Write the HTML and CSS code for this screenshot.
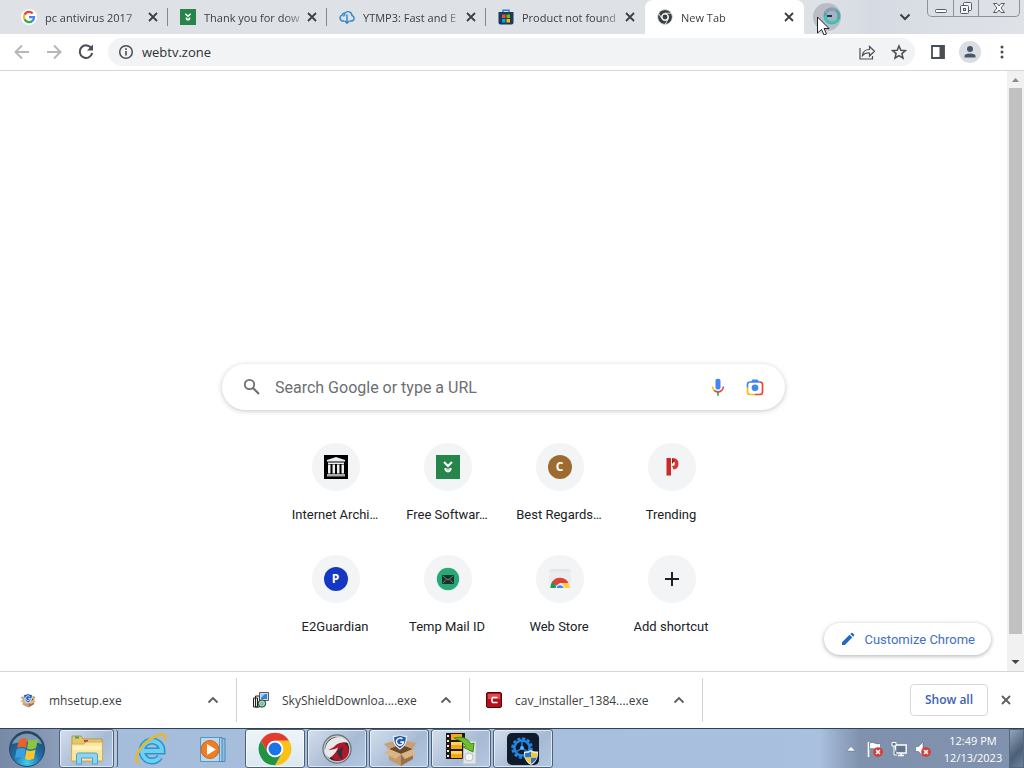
FILE: index.html
```html
<!DOCTYPE html>
<html lang="en">
  <head>
    <meta charset="UTF-8" />
    <meta name="viewport" content="width=device-width, initial-scale=1.0" />
    <title>New Tab</title>
    <link rel="stylesheet" href="styles.css">
  </head>
  <body>
    <!-- shared icons -->
    <svg class="sprite" aria-hidden="true">
      <symbol id="close" viewBox="0 0 16 16">
        <path d="M4 4l8 8M12 4l-8 8" fill="none" stroke="currentColor" stroke-width="1.8" />
      </symbol>
      <symbol id="chevron" viewBox="0 0 16 16">
        <path d="M3.5 10.5L8 6l4.5 4.5" fill="none" stroke="currentColor" stroke-width="1.8" />
      </symbol>
      <symbol id="filehippo" viewBox="0 0 24 24">
        <path fill="#25854a" d="M0 0h24v24H0z" />
        <path d="M8 7l4 4 4-4" fill="none" stroke="#fff" stroke-width="2" />
        <path d="M9.2 13q.3 3.5 2.800 3.500t2.800-3.500" fill="none" stroke="#fff" stroke-width="1.8" />
        <path d="M9.500 13.500l2.500 1 2.500-1" fill="none" stroke="#fff" />
      </symbol>
      <symbol id="shield" viewBox="0 0 24 24">
        <path fill="#e8f0fb" d="M12 1q4 3 10 2 1 14-10 20Q1 17 2 3q6 1 10-2z" />
        <path fill="#2359b0" d="M12 3q4 2.500 8.300 2Q20.500 16 12 21 3.500 16 3.700 5 8 5.500 12 3z" />
        <path d="M15.500 8A5 5 0 1 0 17 12h-4.500" fill="none" stroke="#fff" stroke-width="2" />
      </symbol>
      <symbol id="box" viewBox="0 0 34 34">
        <path fill="#c59a68" d="M6 16l12 5v12L6 27z" />
        <path fill="#9c7148" d="M18 21l12-5v10l-12 7z" />
        <path fill="#6f4a27" d="M6 16l11-5 13 5-12 5z" />
        <path fill="#d8b68c" d="M6 16l12 5-5 5L1 20zM30 16l-12 5 4 5 11-5z" />
        <path fill="#c9a074" d="M6 16l-5-5 10-3 5 4zM30 16l3-6-9-2-5 4z" />
      </symbol>
    </svg>

    <header class="tabstrip">
      <div class="tabs">
        <div class="tab">
          <svg class="favicon" viewBox="0 0 48 48">
            <circle cx="24" cy="24" r="24" fill="#fff" />
            <path fill="none" stroke="#ea4335" stroke-width="7" d="M35 13A15.5 15.5 0 0 0 10.5 17" />
            <path fill="none" stroke="#fbbc05" stroke-width="7" d="M10.5 17a15.5 15.5 0 0 0 0 14" />
            <path fill="none" stroke="#34a853" stroke-width="7" d="M10.5 31A15.5 15.5 0 0 0 34 36" />
            <path fill="none" stroke="#4285f4" stroke-width="7" d="M34 36q5-4 5-11.5H24" />
          </svg>
          <span class="tab-title">pc antivirus 2017</span>
          <button class="icon-button" aria-label="Close tab"><svg class="close"><use href="#close" /></svg></button>
        </div>
        <div class="tab">
          <svg class="favicon"><use href="#filehippo" /></svg>
          <span class="tab-title">Thank you for dow</span>
          <button class="icon-button" aria-label="Close tab"><svg class="close"><use href="#close" /></svg></button>
        </div>
        <div class="tab">
          <svg class="favicon" viewBox="0 0 16 16" fill="none" stroke="#2d87c8" stroke-width="1.4">
            <path d="M5.5 12H3.8A3 3 0 0 1 3 6.2 3 3 0 0 1 6 4a4 4 0 0 1 7 2.5 2.8 2.8 0 0 1-.5 5.5H10.5" />
            <path d="M8 5.5V14M5.800 12L8 14.300 10.200 12M4.500 7.500q.5-2 2-2" />
          </svg>
          <span class="tab-title">YTMP3: Fast and E</span>
          <button class="icon-button" aria-label="Close tab"><svg class="close"><use href="#close" /></svg></button>
        </div>
        <div class="tab">
          <svg class="favicon" viewBox="0 0 16 16">
            <path d="M5 4V1.2h6V4" fill="none" stroke="#2f7fd0" stroke-width="1.4" />
            <path fill="#1c3a5c" d="M.5 3h15v10.5q0 2-2 2h-11q-2 0-2-2z" />
            <path fill="#f25022" d="M4 5.5h3.500V9H4z" />
            <path fill="#7fba00" d="M8.500 5.500H12V9H8.500z" />
            <path fill="#00a4ef" d="M4 10h3.500v3.500H4z" />
            <path fill="#ffb900" d="M8.500 10H12v3.500H8.500z" />
          </svg>
          <span class="tab-title">Product not found</span>
          <button class="icon-button" aria-label="Close tab"><svg class="close"><use href="#close" /></svg></button>
        </div>
        <div class="tab active">
          <svg class="favicon" viewBox="-2 -2 52 52">
            <g fill="#3c4043" stroke="#fff" stroke-width="2">
              <path d="M3.2 12A24 24 0 0 1 44.8 12H24A12 12 0 0 0 13.6 30z" />
              <path d="M44.8 12A24 24 0 0 1 24 48l10.4-18A12 12 0 0 0 24 12z" />
              <path d="M24 48A24 24 0 0 1 3.2 12l10.4 18a12 12 0 0 0 20.8 0z" />
            </g>
            <circle cx="24" cy="24" r="8" fill="#3c4043" />
          </svg>
          <span class="tab-title">New Tab</span>
          <button class="icon-button" aria-label="Close tab"><svg class="close"><use href="#close" /></svg></button>
        </div>
      </div>
      <div class="new-tab">
        <button class="new-tab-button" aria-label="New tab"></button>
        <!-- busy mouse pointer over the new tab button -->
        <svg class="pointer" viewBox="0 0 28 30">
          <circle cx="17" cy="11" r="7" fill="#a9b3bf" stroke="#4fa7a7" stroke-width="3" />
          <path d="M10.500 8A7 7 0 0 1 21 5.500" fill="none" stroke="#8a9fb4" stroke-width="3" />
          <path d="M10 11a7 7 0 0 0 13 3" fill="none" stroke="#2fd0c0" stroke-width="2" />
          <path d="M12 11h5" stroke="#23343c" stroke-width="2" />
          <path d="M2.500 12v16l4-3.500L9 30l2.500-1L9 23.500h5z" fill="#fff" stroke="#222" />
        </svg>
      </div>
      <button class="icon-button tab-search" aria-label="Search tabs">
        <svg viewBox="0 0 16 16"><path d="M3.500 5.500L8 10l4.500-4.500" fill="none" stroke="#3c4043" stroke-width="2" /></svg>
      </button>
      <div class="window-buttons">
        <button aria-label="Minimize">
          <svg viewBox="0 0 24 16"><rect x="6.500" y="9.500" width="11" height="3" rx="1" fill="#fff" stroke="#555a66" /></svg>
        </button>
        <button aria-label="Restore">
          <svg viewBox="0 0 24 16" fill="#f4f5f8" stroke="#555a66">
            <rect x="9.500" y="2.500" width="8" height="8" rx="1" />
            <rect x="6.500" y="5.500" width="8" height="8" rx="1" />
            <rect x="9.500" y="8.500" width="2" height="2" />
          </svg>
        </button>
        <button class="wide" aria-label="Close">
          <svg viewBox="0 0 24 16"><path d="M6.500 3.500H10L12 6l2-2.500h3.500L14 8l3.500 4.500H14L12 10l-2 2.500H6.500L10 8z" fill="#fff" stroke="#555a66" /></svg>
        </button>
      </div>
    </header>

    <div class="toolbar">
      <button class="icon-button disabled" aria-label="Back">
        <svg viewBox="0 0 20 20"><path d="M17 10H3.500M10 3.500L3.500 10l6.500 6.500" /></svg>
      </button>
      <button class="icon-button disabled" aria-label="Forward">
        <svg viewBox="0 0 20 20"><path d="M3 10h13.500M10 3.500l6.500 6.500-6.500 6.500" /></svg>
      </button>
      <button class="icon-button" aria-label="Reload">
        <svg viewBox="0 0 20 20"><path d="M15.500 6.500A6.300 6.300 0 1 0 16.200 11" /><path d="M17 2.500v6h-6z" fill="#4a4d51" stroke="none" /></svg>
      </button>
      <form class="address-bar">
        <svg class="info" viewBox="0 0 16 16">
          <circle cx="8" cy="8" r="6.300" fill="none" stroke="#4a4d51" stroke-width="1.500" />
          <path d="M8 7v4.500M8 4.200V6" stroke="#4a4d51" stroke-width="1.600" />
        </svg>
        <input type="text" aria-label="Address and search bar" value="webtv.zone" />
        <button type="button" class="icon-button" aria-label="Share">
          <svg viewBox="0 0 20 20"><path d="M3 6v11h12.500v-3M5.500 13.500q.5-6 7-6v-3l5 4.800-5 4.700v-3q-4.500-.5-7 2.500z" stroke-width="1.200" /></svg>
        </button>
        <button type="button" class="icon-button" aria-label="Bookmark this page">
          <svg viewBox="0 0 20 20"><path d="M10 4l1.800 4.200 4.600.4-3.500 3 1.100 4.500-4-2.500-4 2.500 1.100-4.500-3.500-3 4.600-.4z" stroke-width="1.500" /></svg>
        </button>
      </form>
      <button class="icon-button" aria-label="Side panel">
        <svg viewBox="0 0 20 20"><path d="M4 4h12v12H4z" stroke-width="1.800" /><path d="M11.500 4H16v12h-4.500z" fill="#4a4d51" stroke="none" /></svg>
      </button>
      <button class="icon-button profile" aria-label="Profile">
        <svg viewBox="0 0 20 20"><path d="M10 4a3 3 0 1 1 0 6 3 3 0 0 1 0-6zM4.500 15.500V14q0-2.500 5.500-2.500t5.500 2.500v1.500z" fill="#4a5568" stroke="none" /></svg>
      </button>
      <button class="icon-button" aria-label="Menu">
        <svg viewBox="0 0 20 20"><path d="M10 5h.01M10 10h.01M10 15h.01" stroke-width="3" stroke-linecap="round" /></svg>
      </button>
    </div>

    <div class="viewport">
      <main class="new-tab-page">
        <form class="search-box">
          <svg class="search-icon" viewBox="0 0 20 20">
            <circle cx="7.500" cy="7.500" r="4.700" fill="none" stroke="#6b6f74" stroke-width="1.800" />
            <path d="M11 11l6 6" stroke="#6b6f74" stroke-width="2" />
          </svg>
          <input type="text" aria-label="Search" placeholder="Search Google or type a URL" />
          <button type="button" class="icon-button" aria-label="Search by voice">
            <svg viewBox="0 0 24 24">
              <rect x="9" y="2" width="6" height="13" rx="2.500" fill="#4285f4" />
              <path d="M5.500 11.500q0 3 2 4.500" fill="none" stroke="#fbbc04" stroke-width="1.800" />
              <path d="M7.500 16q4.500 4 9 0 2-1.500 2-4.500" fill="none" stroke="#ea4335" stroke-width="1.800" />
              <path d="M12 18v4.500" stroke="#34a853" stroke-width="2" />
            </svg>
          </button>
          <button type="button" class="icon-button" aria-label="Search by image">
            <svg viewBox="0 0 24 24" fill="none" stroke-width="2">
              <path d="M3 13V9q0-3 3-3h12" stroke="#4285f4" />
              <path fill="#4285f4" d="M7 6l2-3h6l2 3z" />
              <path d="M3 13v5q0 3 3 3h6" stroke="#fbbc04" />
              <path d="M12 21h6q3 0 3-3V9q0-3-3-3" stroke="#ea4335" />
              <circle cx="12" cy="13" r="4" fill="#4285f4" />
            </svg>
          </button>
        </form>

        <nav class="shortcuts">
          <a class="shortcut" href="#">
            <span class="tile">
              <svg viewBox="0 0 24 24">
                <path d="M0 0h24v24H0z" />
                <path fill="#eee" d="M12 2l9 3v1.500H3V5zM4 7.500h16V9H4zM4 9.500h2.500v9H4zM8.500 9.500H11v9H8.500zM13 9.500h2.500v9H13zM17.500 9.500H20v9h-2.500z" />
                <path fill="#aaa" d="M3 19h18v2.500H3z" />
              </svg>
            </span>
            <span class="label">Internet Archi…</span>
          </a>
          <a class="shortcut" href="#">
            <span class="tile"><svg><use href="#filehippo" /></svg></span>
            <span class="label">Free Softwar…</span>
          </a>
          <a class="shortcut" href="#">
            <span class="tile"><span class="letter brown">C</span></span>
            <span class="label">Best Regards…</span>
          </a>
          <a class="shortcut" href="#">
            <span class="tile">
              <svg viewBox="0 0 24 24">
                <path fill="#c92a2a" d="M6.500 3h4.500v17.500H6.500z" />
                <path fill="#d83535" d="M12 3q6.500 0 6.500 5.500t-5 6L12 11q3 0 3-2.500t-3-2z" />
                <path fill="#8f1d22" d="M12 3.500l2.500 2.500-2.500 3z" />
              </svg>
            </span>
            <span class="label">Trending</span>
          </a>
          <a class="shortcut" href="#">
            <span class="tile"><span class="letter blue">P</span></span>
            <span class="label">E2Guardian</span>
          </a>
          <a class="shortcut" href="#">
            <span class="tile">
              <svg viewBox="0 0 24 24">
                <circle cx="12" cy="12" r="11.200" fill="#27a877" />
                <rect x="6" y="8" width="12" height="9" rx="1" fill="#17302a" />
                <path d="M7 9l5 4 5-4M7 16l3.500-4M17 16l-3.500-4" fill="none" stroke="#66857c" />
              </svg>
            </span>
            <span class="label">Temp Mail ID</span>
          </a>
          <a class="shortcut" href="#">
            <span class="tile">
              <svg viewBox="0 0 24 24">
                <path fill="#eaedee" d="M1 2h22v19H1z" />
                <path fill="#e2e6e8" d="M3 2h18v3H3z" />
                <path fill="#0f9d58" d="M2.500 21q0-5 2.500-7l4 7z" />
                <path fill="#db4437" d="M4 15a9.500 9.500 0 0 1 16.500 1H12l-4 3z" />
                <path fill="#ffcd40" d="M14 16h6.500q1.200 2 1.200 5H16z" />
                <path fill="#f1f1f1" d="M7.500 21a4.600 4.600 0 0 1 9 0z" />
                <path fill="#4285f4" d="M8.500 21a3.600 3.600 0 0 1 7 0z" />
              </svg>
            </span>
            <span class="label">Web Store</span>
          </a>
          <a class="shortcut" href="#">
            <span class="tile">
              <svg viewBox="0 0 24 24"><path d="M12 5v14M5 12h14" stroke="#202124" stroke-width="2" /></svg>
            </span>
            <span class="label">Add shortcut</span>
          </a>
        </nav>

        <button class="customize">
          <svg viewBox="0 0 16 16"><path fill="#2467c9" d="M2 14v-2.800l7.500-7.500 2.800 2.800L4.800 14zM10.300 2.900l1-1q.6-.5 1.200 0l1.600 1.600q.5.600 0 1.200l-1 1z" /></svg>
          Customize Chrome
        </button>
      </main>
      <div class="scrollbar">
        <svg viewBox="0 0 17 17"><path fill="#8b8b8b" d="M5 11l3.500-4 3.500 4z" /></svg>
        <div class="thumb"></div>
        <svg viewBox="0 0 17 17"><path fill="#444" d="M4.500 6L8.500 10l4-4z" /></svg>
      </div>
    </div>

    <section class="downloads">
      <div class="download">
        <svg class="file-icon" viewBox="0 0 34 34">
          <use href="#box" />
          <use href="#shield" x="5" y="1" width="24" height="25" />
        </svg>
        <span class="file-name">mhsetup.exe</span>
        <button class="icon-button" aria-label="Options"><svg><use href="#chevron" /></svg></button>
      </div>
      <div class="download">
        <svg class="file-icon" viewBox="0 0 16 16">
          <path fill="#e9e9e9" stroke="#222" d="M.5 6h4v9h-4zM2.500 4h4v11h-4z" />
          <path fill="#d5dae0" stroke="#333" stroke-width=".8" d="M6.500.5h9v8h-9z" />
          <path fill="#2d86dc" d="M8 2h6v5H8z" />
          <path fill="#8ecbff" d="M8 2h4L8 6z" />
          <circle cx="9" cy="11.500" r="3.700" fill="#9be0b0" stroke="#17362a" />
          <circle cx="9" cy="11.500" r="1" fill="#fff" stroke="#333" stroke-width=".5" />
        </svg>
        <span class="file-name">SkyShieldDownloa....exe</span>
        <button class="icon-button" aria-label="Options"><svg><use href="#chevron" /></svg></button>
      </div>
      <div class="download">
        <svg class="file-icon" viewBox="0 0 16 16">
          <rect x=".5" y=".5" width="15" height="15" rx="1.500" fill="#b80f19" stroke="#4c090d" />
          <path fill="#dd4a50" d="M2 2h12v5H2z" />
          <path d="M11.500 5.500H6.500q-1.500 2.500 0 5h5" fill="none" stroke="#fff" stroke-width="1.600" />
        </svg>
        <span class="file-name">cav_installer_1384....exe</span>
        <button class="icon-button" aria-label="Options"><svg><use href="#chevron" /></svg></button>
      </div>
      <button class="show-all">Show all</button>
      <button class="icon-button" aria-label="Close downloads bar"><svg><use href="#close" /></svg></button>
    </section>

    <footer class="taskbar">
      <button class="start" aria-label="Start">
        <svg viewBox="0 0 38 38">
          <defs>
            <radialGradient id="orb" cx=".5" cy=".9" r=".9">
              <stop offset="0" stop-color="#3fd0f5" />
              <stop offset=".45" stop-color="#1f6ea9" />
              <stop offset="1" stop-color="#24435f" />
            </radialGradient>
          </defs>
          <circle cx="19" cy="19" r="17.500" fill="url(#orb)" stroke="#2a4560" />
          <path fill="#b8cad9" opacity=".6" d="M4 14a16 16 0 0 1 30 0q-15-5-30 0z" />
          <path fill="#e8622a" d="M11 10q4-3 8.500-1L18 18q-4-2-9 0z" />
          <path fill="#8cc63e" d="M20.500 9.500q4 2 9.500-.5L28 18q-4.500 2.500-9 .5z" />
          <path fill="#3c9fe0" d="M8.500 19.500q4.500-2.500 9-.5L16 28q-4.500-2-9 .5z" />
          <path fill="#fcc52d" d="M18.500 20q4.500 2 9-.5L26 28.500q-4.500 2.500-9 .5z" />
        </svg>
      </button>
      <button class="task open stacked" aria-label="Windows Explorer">
        <svg viewBox="0 0 34 34">
          <path fill="#e6c66a" stroke="#b9974a" d="M2 4h9l2 3h19v22H2z" />
          <path fill="#42a548" d="M5 4.500h4v2H5z" />
          <path fill="#c4412d" d="M14 8h4v2h-4z" />
          <path fill="#2c88c8" d="M22 10h5v2h-5z" />
          <path fill="#f9e79f" stroke="#cfae5d" d="M1.500 12H14l2-2h16.500v19h-31z" />
          <path fill="#fff3bd" d="M3 14h28v4H3z" />
          <path fill="#8fd3ef" stroke="#4aa2cf" d="M6.500 32v-9q0-2 2-2h17q2 0 2 2v9h-5v-6h-11v6z" />
        </svg>
      </button>
      <button class="task" aria-label="Internet Explorer">
        <svg viewBox="0 0 34 34">
          <path d="M9 19H28A10 10 0 1 0 26 25" fill="none" stroke="#2c93cf" stroke-width="7" />
          <path d="M9 19H28A10 10 0 1 0 26 25" fill="none" stroke="#6bd0f2" stroke-width="4" />
          <path d="M5 31Q-1 29 6 17 16 4 28 2.500q5 0 2.500 6" fill="none" stroke="#e5b92b" stroke-width="2.500" />
        </svg>
      </button>
      <button class="task" aria-label="Windows Media Player">
        <svg viewBox="0 0 34 34">
          <path fill="#8fbfe0" stroke="#4a88b8" d="M20 6.500h9v23h-9z" />
          <path fill="#a9d3ec" stroke="#4a88b8" d="M16 5.500h10v24H16z" />
          <path fill="#b9d9ef" stroke="#5795c2" d="M4.500 5.500h19v24h-19z" />
          <circle cx="14" cy="17.500" r="9" fill="#ee7d23" stroke="#d3631a" />
          <path fill="#fff" d="M11 12l9 5.500-9 5.500z" />
        </svg>
      </button>
      <button class="task open current" aria-label="Google Chrome">
        <svg viewBox="-1 -1 50 50">
          <path fill="#e33b2e" d="M3.200 12A24 24 0 0 1 44.800 12H24A12 12 0 0 0 13.600 30z" />
          <path fill="#fbc116" d="M44.800 12A24 24 0 0 1 24 48l10.400-18A12 12 0 0 0 24 12z" />
          <path fill="#229342" d="M24 48A24 24 0 0 1 3.200 12l10.400 18a12 12 0 0 0 20.800 0z" />
          <circle cx="24" cy="24" r="12" fill="#fff" />
          <circle cx="24" cy="24" r="9.500" fill="#1a73e8" />
        </svg>
      </button>
      <button class="task open" aria-label="Comodo Dragon">
        <svg viewBox="-1 -1 36 36">
          <circle cx="17" cy="17" r="15.500" fill="#6b6f76" />
          <circle cx="17" cy="17" r="13.500" fill="#26292e" stroke="#c3c6ca" stroke-width="1.500" />
          <circle cx="19" cy="19" r="10.500" fill="#b3152b" />
          <path fill="#e6e8ea" d="M4 19Q5 7 16 4.500q9-1 13 6-8-2-13 2-3 4-8 5 6 1 10-2-2 7-9 11-5-3-5-7.500z" />
          <path fill="#2e3237" d="M17 20q2-4 7-5-3 6-1 13-5-2-6-8z" />
        </svg>
      </button>
      <button class="task open" aria-label="Setup">
        <svg viewBox="-1 -1 36 36">
          <use href="#box" />
          <use href="#shield" x="9" y="0" width="18" height="19" />
        </svg>
      </button>
      <button class="task open" aria-label="Video converter">
        <svg viewBox="0 0 34 34">
          <path fill="#211a10" d="M2 1h19v26H2z" />
          <path fill="#f5a71c" d="M7 2h11v6H7zM7 10h11v7H7zM7 19h11v7H7z" />
          <path fill="#ffd45c" d="M7 10h11v3H7zM7 19h11v3H7z" />
          <path fill="#eee" d="M3 3h2v2H3zM3 8h2v2H3zM3 13h2v2H3zM3 18h2v2H3zM3 23h2v2H3z" />
          <path fill="#dfe5e8" stroke="#bcc6ca" d="M20 9h12v23H19z" />
          <path fill="#72bd2e" stroke="#3d8a18" d="M10 6q12-3 17 6l3-1-1 9-10-5 3-1Q18 8 10 6z" />
          <circle cx="25" cy="25" r="4" fill="#f5f7f7" stroke="#b9c4c8" />
        </svg>
      </button>
      <button class="task open" aria-label="Driver updater">
        <svg viewBox="0 0 34 34">
          <rect x="1" y="1" width="32" height="32" rx="5" fill="#101b2c" />
          <circle cx="16" cy="16" r="9" fill="none" stroke="#2584e0" stroke-width="3.500" stroke-dasharray="3 1.700" />
          <circle cx="16" cy="16" r="7.500" fill="none" stroke="#2584e0" stroke-width="2.500" />
          <path d="M16 16V9M16 16l-6 4M16 16l6 4" stroke="#2584e0" stroke-width="1.500" />
          <circle cx="16" cy="16" r="2" fill="#5bb0ff" />
          <path fill="#e9edf0" d="M25 18q3 2 7 1.500.5 10-7 13.500-7.500-3.500-7-13.500 4 .5 7-1.500z" />
          <path fill="#2a74c9" d="M25 19.500v6h-5.700q-.4-2-.3-4.500 3.500.2 6-1.500zM25 25.500h5.700q-1 4-5.700 6.200z" />
          <path fill="#f7c92c" d="M25 19.500q2.500 1.700 6 1.500 0 2.500-.3 4.500H25zM25 25.500v6.200q-4.700-2.200-5.700-6.200z" />
        </svg>
      </button>
      <div class="tray">
        <button aria-label="Show hidden icons">
          <svg viewBox="0 0 16 16"><path fill="#fff" stroke="#56657d" stroke-width=".5" d="M3.500 10L8 5.500l4.500 4.500z" /></svg>
        </button>
        <button aria-label="Action Center">
          <svg viewBox="0 0 16 16">
            <path d="M1.500 1v15" stroke="#fff" stroke-width="1.600" />
            <path fill="#fff" stroke="#475369" stroke-width=".5" d="M2.500 2q3-1 5 0 3 1.500 6 .5v6q-3 1-6-.5-2-1-5 0z" />
            <circle cx="11" cy="11" r="4.800" fill="#d63a30" />
            <path d="M9 9l4 4M13 9l-4 4" stroke="#fff" stroke-width="1.600" />
          </svg>
        </button>
        <button aria-label="Network">
          <svg viewBox="0 0 16 16">
            <path fill="#66758e" stroke="#fff" stroke-width="1.400" d="M4.500 4h10.700v8H4.500z" />
            <path d="M7 14.500h6M10 12v2" stroke="#fff" stroke-width="1.500" />
            <path fill="#66758e" stroke="#fff" d="M1 1.500h4V5H1zM3 5v9h3" />
          </svg>
        </button>
        <button aria-label="Volume">
          <svg viewBox="0 0 16 16">
            <path fill="#fff" stroke="#475369" stroke-width=".5" d="M.5 5.500h3L8 1v14l-4.500-4.500h-3z" />
            <circle cx="11" cy="11" r="4.800" fill="#d63a30" />
            <path d="M9 9l4 4M13 9l-4 4" stroke="#fff" stroke-width="1.600" />
          </svg>
        </button>
      </div>
      <div class="clock">
        <time>12:49 PM</time>
        <time>12/13/2023</time>
      </div>
      <button class="show-desktop" aria-label="Show desktop"></button>
    </footer>
  </body>
</html>
```
FILE: styles.css
```css
* {
  box-sizing: border-box;
}
body {
  display: flex;
  flex-direction: column;
  height: 100vh;
  margin: 0;
  overflow: hidden;
  background: #fff;
  color: #3c4043;
  font-family: "Open Sans", "Noto Sans", sans-serif;
  font-size: 12px;
}
button,
input {
  font: inherit;
  color: inherit;
  border: 0;
  padding: 0;
  background: none;
}
svg {
  display: block;
}
.sprite {
  position: absolute;
  width: 0;
  height: 0;
}
.icon-button {
  display: flex;
  flex: none;
  align-items: center;
  justify-content: center;
}
.icon-button svg {
  width: 16px;
  height: 16px;
}

/* tab strip */
.tabstrip {
  display: flex;
  height: 34px;
  background: linear-gradient(90deg, #dee1e6 80%, #d6dbe3 85%, #dfe3e8);
}
.tabs {
  display: flex;
  padding-left: 9px;
}
.tab {
  display: flex;
  align-items: center;
  width: 159px;
  height: 34px;
  padding: 0 7px 0 12px;
  position: relative;
}
.tab:not(.active)::after {
  content: "";
  position: absolute;
  right: 0;
  top: 8px;
  height: 18px;
  border-right: 1px solid #85888d;
}
.tab:nth-last-child(2)::after {
  display: none;
}
.tab.active {
  background: #fff;
  border-radius: 8px 8px 0 0;
}
.favicon {
  flex: none;
  width: 16px;
  height: 16px;
  margin-right: 8px;
}
.tab-title {
  flex: 1;
  white-space: nowrap;
  font-size: 11px;
  mask-image: linear-gradient(90deg, #000 80%, rgba(0, 0, 0, 0.2));
}
.close {
  color: #3c4043;
}
.new-tab {
  position: relative;
  padding: 3px 0 0 9px;
}
.new-tab-button {
  width: 28px;
  height: 28px;
  border-radius: 50%;
  background: #babdc5;
}
.pointer {
  position: absolute;
  left: 11px;
  top: 5px;
  width: 28px;
  height: 30px;
}
.tab-search {
  margin-left: auto;
  margin-right: 14px;
}
.window-buttons {
  display: flex;
  height: 17px;
  margin-right: 4px;
  border: 1px solid #8d919b;
  border-top: 0;
  border-radius: 0 0 5px 5px;
}
.window-buttons button {
  width: 25px;
}
.window-buttons button + button {
  border-left: 1px solid #8d919b;
}
.window-buttons .wide {
  width: 41px;
}
.window-buttons svg {
  width: 24px;
  height: 16px;
  margin: 0 auto;
}

/* toolbar */
.toolbar {
  display: flex;
  align-items: center;
  height: 37px;
  padding: 0 6px;
  border-bottom: 1px solid #d5d7da;
}
.toolbar .icon-button {
  width: 32px;
  height: 28px;
}
.toolbar .icon-button svg {
  width: 20px;
  height: 20px;
  fill: none;
  stroke: #4a4d51;
  stroke-width: 2;
}
.toolbar .disabled svg {
  stroke: #b5b7ba;
}
.address-bar {
  display: flex;
  flex: 1;
  align-items: center;
  height: 28px;
  margin: 0 7px 0 6px;
  padding-left: 10px;
  border-radius: 14px;
  background: #f1f3f4;
}
.info {
  width: 16px;
  height: 16px;
}
.address-bar input {
  flex: 1;
  min-width: 0;
  margin-left: 8px;
  font-size: 13px;
  color: #303236;
}
.toolbar .profile svg {
  border-radius: 50%;
  background: #dadde4;
  box-shadow: 0 0 0 1px #dadde4;
}

/* page */
.viewport {
  display: flex;
  flex: 1;
  min-height: 0;
}
.new-tab-page {
  display: flex;
  flex: 1;
  flex-direction: column;
  align-items: center;
  justify-content: flex-end;
  padding-bottom: 20px;
  position: relative;
  font-family: Roboto, sans-serif;
}
.search-box {
  display: flex;
  align-items: center;
  width: 100%;
  max-width: 563px;
  height: 46px;
  margin-bottom: 17px;
  padding: 0 20px;
  border-radius: 23px;
  box-shadow: 0 1px 5px rgba(32, 33, 36, 0.26);
}
.search-icon {
  width: 20px;
  height: 20px;
}
.search-box input {
  flex: 1;
  min-width: 0;
  margin-left: 13px;
  font-size: 16px;
}
.search-box input::placeholder {
  color: #6b6f74;
}
.search-box .icon-button {
  margin-left: 17px;
}
.search-box .icon-button svg {
  width: 20px;
  height: 20px;
}
.shortcuts {
  display: flex;
  flex-wrap: wrap;
  width: 448px;
}
.shortcut {
  display: flex;
  flex-direction: column;
  align-items: center;
  width: 112px;
  height: 112px;
  padding-top: 16px;
  color: #202124;
  font-size: 13px;
  line-height: 16px;
  text-decoration: none;
}
.tile {
  display: flex;
  align-items: center;
  justify-content: center;
  width: 48px;
  height: 48px;
  margin-bottom: 16px;
  border-radius: 50%;
  background: #f3f4f5;
}
.tile svg,
.letter {
  width: 24px;
  height: 24px;
}
.letter {
  border-radius: 50%;
  color: #fff;
  font-family: "Open Sans", sans-serif;
  font-size: 12px;
  font-weight: bold;
  line-height: 24px;
  text-align: center;
}
.brown {
  background: #9c6b30;
}
.blue {
  background: #1437c4;
}
.label {
  padding-right: 1px;
  white-space: nowrap;
}
.customize {
  display: flex;
  align-items: center;
  position: absolute;
  right: 16px;
  bottom: 16px;
  height: 32px;
  padding: 0 16px;
  border-radius: 16px;
  background: #fff;
  box-shadow: 0 1px 4px rgba(0, 0, 0, 0.32);
  color: #3f6fc6;
  font-size: 13px;
}
.customize svg {
  width: 16px;
  height: 16px;
  margin-right: 8px;
}
.scrollbar {
  display: flex;
  flex-direction: column;
  align-items: center;
  width: 17px;
  background: #f1f1f1;
}
.scrollbar svg {
  width: 17px;
  height: 17px;
}
.thumb {
  width: 13px;
  flex: 1;
  margin-bottom: 20px;
  background: #c1c1c1;
}

/* downloads bar */
.downloads {
  display: flex;
  align-items: center;
  height: 57px;
  padding: 0 10px 0 4px;
  border-top: 1px solid #d5d7da;
}
.download {
  display: flex;
  align-items: center;
  width: 233px;
  height: 44px;
  padding: 0 15px 0 16px;
  border-right: 1px solid #d0d2d5;
}
.file-icon {
  width: 16px;
  height: 16px;
  margin-right: 13px;
}
.file-name {
  flex: 1;
  white-space: nowrap;
}
.downloads .icon-button {
  color: #5a5d61;
}
.show-all {
  width: 78px;
  height: 32px;
  margin-left: auto;
  margin-right: 10px;
  padding-bottom: 2px;
  border: 1px solid #d5d8dc;
  border-radius: 4px;
  color: #3c63b5;
  font-weight: 600;
}

/* taskbar */
.taskbar {
  display: flex;
  height: 40px;
  border-top: 1px solid #2f4156;
  background: linear-gradient(90deg, #7789a4, #8799b5 50px, #a5bcdb 120px, #a9c0de 80%, #7f91ad 84%, #8192ae);
}
.start {
  width: 38px;
  margin: 0 13px 0 8px;
}
.start svg {
  width: 38px;
  height: 38px;
}
.task {
  display: flex;
  align-items: center;
  justify-content: center;
  width: 60px;
  height: 39px;
  margin-right: 2px;
  border: 1px solid transparent;
  border-radius: 3px;
}
.task svg {
  width: 34px;
  height: 34px;
}
.task.open {
  border-color: #4c6079;
  background: linear-gradient(135deg, #d3deec, #a6bad4 60%, #b3c8e2);
  box-shadow: inset 0 0 0 1px rgba(255, 255, 255, 0.6);
}
.task.current {
  background: linear-gradient(#eef5f8, #dbe8f1);
}
.task.stacked {
  width: 55px;
  margin-right: 7px;
  box-shadow: inset 0 0 0 1px rgba(255, 255, 255, 0.6), 4px 0 0 -1px #b5c7dd, 5px 0 0 -1px #4c6079;
}
.tray {
  display: flex;
  align-items: center;
  gap: 8px;
  margin-left: auto;
  margin-right: 12px;
}
.tray svg {
  width: 16px;
  height: 16px;
}
.clock {
  display: flex;
  flex-direction: column;
  align-items: center;
  justify-content: center;
  width: 60px;
  margin-right: 6px;
  color: #fff;
  font-size: 11px;
  line-height: 17px;
}
.show-desktop {
  width: 15px;
  border: 1px solid #56687f;
  background: linear-gradient(135deg, #93a5bc, #4c5f78 60%, #6f839d);
}
```
